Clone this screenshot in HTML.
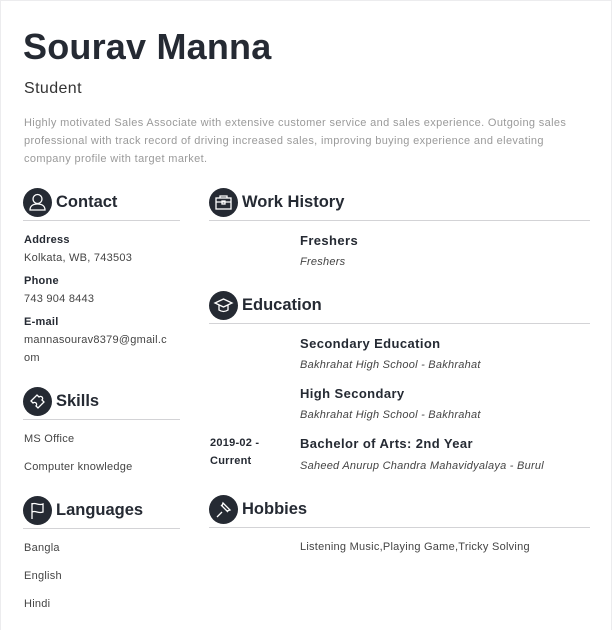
<!DOCTYPE html><html><head><style>
body{margin:0;background:#fff;font-family:"Liberation Sans",sans-serif;color:#252a33}
.page{position:absolute;left:0;top:0;width:610px;height:629px;border:1px solid #ececee;border-bottom:none;background:#fff}
.a{position:absolute;white-space:nowrap;letter-spacing:0.25px}
h1{position:absolute;left:22px;top:25px;margin:0;font-size:36px;font-weight:bold;letter-spacing:0.2px}
.sub{left:23px;top:79px;font-size:16px;color:#333;letter-spacing:0.4px}
.sum{left:23px;top:113px;font-size:11px;line-height:18px;color:#9a9a9a;white-space:normal;width:560px;letter-spacing:0.35px}
.hd{position:absolute;height:32px;border-bottom:1px solid #d3d3d6}
.hd .ic{position:absolute;left:0;top:0;width:29px;height:29px;border-radius:50%;background:#252a33}
.hd .t{position:absolute;left:33px;top:5px;font-size:16.5px;font-weight:bold}
.lb{font-size:11px;font-weight:bold}
.v{font-size:11px;color:#444}
.it{font-size:11px;font-style:italic;color:#444}
.bt{font-size:13px;font-weight:bold;letter-spacing:0.4px}
svg{position:absolute;left:0;top:0}
</style></head><body><div class="page">
<h1>Sourav Manna</h1>
<div class="a sub">Student</div>
<div class="a sum">Highly motivated Sales Associate with extensive customer service and sales experience. Outgoing sales professional with track record of driving increased sales, improving buying experience and elevating company profile with target market.</div>

<div class="hd" style="left:22px;top:187px;width:157px"><div class="ic"><svg width="29" height="29" fill="none" stroke="#fff" stroke-width="1.3"><circle cx="14.5" cy="11" r="4.5"/><path d="M7 22c0-4 3-6 7.5-6s7.5 2 7.5 6z"/></svg></div><div class="t">Contact</div></div>
<div class="a lb" style="left:23px;top:233px">Address</div>
<div class="a v" style="left:23px;top:251px">Kolkata, WB, 743503</div>
<div class="a lb" style="left:23px;top:274px">Phone</div>
<div class="a v" style="left:23px;top:292px">743 904 8443</div>
<div class="a lb" style="left:23px;top:315px">E-mail</div>
<div class="a v" style="left:23px;top:333px">mannasourav8379@gmail.c</div>
<div class="a v" style="left:23px;top:351px">om</div>

<div class="hd" style="left:22px;top:386px;width:157px"><div class="ic"><svg width="29" height="29" fill="none" stroke="#fff" stroke-width="1.3"><path d="M8 14l6-6 2 2a2 2 0 013 3l2 2-6 6-2-2a2 2 0 00-3-3z"/></svg></div><div class="t">Skills</div></div>
<div class="a v" style="left:23px;top:432px">MS Office</div>
<div class="a v" style="left:23px;top:460px">Computer knowledge</div>

<div class="hd" style="left:22px;top:495px;width:157px"><div class="ic"><svg width="29" height="29" fill="none" stroke="#fff" stroke-width="1.3"><path d="M9 23V7M9 8c4-2 6 2 11 0v8c-5 2-7-2-11 0"/></svg></div><div class="t">Languages</div></div>
<div class="a v" style="left:23px;top:541px">Bangla</div>
<div class="a v" style="left:23px;top:569px">English</div>
<div class="a v" style="left:23px;top:597px">Hindi</div>

<div class="hd" style="left:208px;top:187px;width:381px"><div class="ic"><svg width="29" height="29" fill="none" stroke="#fff" stroke-width="1.3"><rect x="7" y="10" width="15" height="11"/><path d="M11 10V8h7v2M7 14h15"/><rect x="13" y="13" width="3" height="3"/></svg></div><div class="t">Work History</div></div>
<div class="a bt" style="left:299px;top:232px">Freshers</div>
<div class="a it" style="left:299px;top:255px">Freshers</div>

<div class="hd" style="left:208px;top:290px;width:381px"><div class="ic"><svg width="29" height="29" fill="none" stroke="#fff" stroke-width="1.3"><path d="M6 12l8.5-4 8.5 4-8.5 4z"/><path d="M10 14v5c3 2 6 2 9 0v-5"/></svg></div><div class="t">Education</div></div>
<div class="a bt" style="left:299px;top:335px">Secondary Education</div>
<div class="a it" style="left:299px;top:358px">Bakhrahat High School - Bakhrahat</div>
<div class="a bt" style="left:299px;top:385px">High Secondary</div>
<div class="a it" style="left:299px;top:408px">Bakhrahat High School - Bakhrahat</div>
<div class="a lb" style="left:209px;top:436px">2019-02 -</div>
<div class="a lb" style="left:209px;top:454px">Current</div>
<div class="a bt" style="left:299px;top:435px">Bachelor of Arts: 2nd Year</div>
<div class="a it" style="left:299px;top:459px">Saheed Anurup Chandra Mahavidyalaya - Burul</div>

<div class="hd" style="left:208px;top:494px;width:381px"><div class="ic"><svg width="29" height="29" fill="none" stroke="#fff" stroke-width="1.3"><path d="M8 22l5-5M12 10l7 7M14 8l7 7-3 1-5-5z"/></svg></div><div class="t">Hobbies</div></div>
<div class="a v" style="left:299px;top:540px">Listening Music,Playing Game,Tricky Solving</div>
</div></body></html>
